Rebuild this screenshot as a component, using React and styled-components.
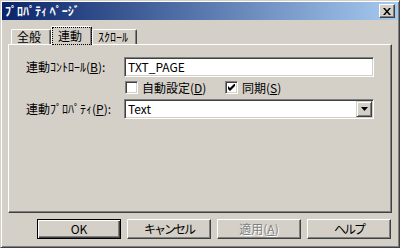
import React from "react";
import styled, { createGlobalStyle } from "styled-components";

const Global = createGlobalStyle`
  html, body { margin: 0; padding: 0; background: #d4d0c8; }
  body { font-family: "Noto Sans CJK JP", "DejaVu Sans", sans-serif; font-size: 12px; color: #000; }
  * { box-sizing: border-box; }
`;

const Window = styled.div`
  width: 400px;
  height: 248px;
  background: #d4d0c8;
  border: 1px solid;
  border-color: #d4d0c8 #404040 #404040 #d4d0c8;
  box-shadow: inset 1px 1px #fff, inset -1px -1px #808080;
  padding: 1px;
  display: flex;
  flex-direction: column;
`;

const TitleBar = styled.div`
  height: 18px;
  background: linear-gradient(to right, #0a246a, #a6caf0);
  display: flex;
  align-items: center;
  padding: 0 3px 0 3px;
`;

const Title = styled.span`
  flex: 1;
  color: #fff;
  font-weight: bold;
  font-size: 12px;
  line-height: 16px;
`;

const CloseButton = styled.div`
  width: 16px;
  height: 14px;
  background: #d4d0c8;
  border: 1px solid;
  border-color: #fff #404040 #404040 #fff;
  box-shadow: inset -1px -1px #808080;
  display: flex;
  align-items: center;
  justify-content: center;
`;

const Body = styled.div`
  padding: 6px 6px 0 6px;
  display: flex;
  flex-direction: column;
`;

const TabStrip = styled.div`
  display: flex;
  align-items: flex-end;
  height: 18px;
  padding-left: 3px;
  position: relative;
  z-index: 1;
`;

const Tab = styled.div`
  width: ${(p) => p.$w}px;
  height: ${(p) => (p.$active ? 19 : 15)}px;
  margin-bottom: ${(p) => (p.$active ? -1 : 0)}px;
  background: #d4d0c8;
  border-top: 1px solid #fff;
  border-left: 1px solid #fff;
  border-right: 1px solid #404040;
  box-shadow: inset -1px 0 #808080;
  border-radius: 2px 2px 0 0;
  display: flex;
  align-items: ${(p) => (p.$active ? "flex-start" : "center")};
  padding: ${(p) => (p.$active ? "1px 0 0 1px" : "0 0 0 5px")};
  line-height: 14px;
  white-space: nowrap;
`;

const FocusLabel = styled.span`
  outline: 1px dotted #000;
  outline-offset: 0;
  padding: 0 5px 1px 5px;
  width: 39px;
  line-height: 15px;
`;

const Panel = styled.div`
  width: 384px;
  height: 169px;
  border: 1px solid;
  border-color: #fff #404040 #404040 #fff;
  box-shadow: inset -1px -1px #808080;
  padding: 12px 0 0 17px;
  display: grid;
  grid-template-columns: 98px 250px;
  grid-template-rows: 20px 13px 20px;
  row-gap: 4px;
  align-content: start;
  align-items: center;
`;

const Label = styled.span`
  white-space: nowrap;
  line-height: 14px;
  margin-top: ${(p) => p.$shift || 0}px;
`;

const Key = styled.span`
  text-decoration: underline;
  text-underline-offset: 1px;
`;

const Field = styled.div`
  height: 20px;
  background: #fff;
  border: 1px solid;
  border-color: #808080 #fff #fff #808080;
  box-shadow: inset 1px 1px #404040, inset -1px -1px #d4d0c8;
  display: flex;
  align-items: center;
  padding: 0 2px 0 3px;
  line-height: 14px;
`;

const FieldText = styled.span`
  flex: 1;
`;

const CheckRow = styled.div`
  grid-column: 2;
  display: flex;
  align-items: center;
  padding-left: 1px;
  height: 13px;
`;

const Check = styled.div`
  display: flex;
  align-items: center;
  width: ${(p) => p.$w}px;
  gap: 4px;
  line-height: 14px;
  white-space: nowrap;
`;

const Box = styled.div`
  width: 13px;
  height: 13px;
  flex: none;
  background: #fff;
  border: 1px solid;
  border-color: #808080 #fff #fff #808080;
  box-shadow: inset 1px 1px #404040, inset -1px -1px #d4d0c8;
  display: flex;
  align-items: center;
  justify-content: center;
`;

const ComboRow = styled.div`
  grid-column: 2;
  margin-top: 2px;
`;

const DropButton = styled.div`
  width: 16px;
  height: 16px;
  background: #d4d0c8;
  border: 1px solid;
  border-color: #d4d0c8 #404040 #404040 #d4d0c8;
  box-shadow: inset 1px 1px #fff, inset -1px -1px #808080;
  display: flex;
  align-items: center;
  justify-content: center;
  margin-right: -1px;
`;

const ButtonRow = styled.div`
  display: flex;
  justify-content: flex-end;
  gap: 6px;
  margin-top: 6px;
  padding-right: 1px;
`;

const Button = styled.div`
  width: 84px;
  height: 20px;
  background: #d4d0c8;
  border: 1px solid;
  border-color: ${(p) => (p.$default ? "#000" : "#fff #404040 #404040 #fff")};
  box-shadow: ${(p) =>
    p.$default
      ? "inset 1px 1px #fff, inset -1px -1px #404040, inset -2px -2px #808080"
      : "inset -1px -1px #808080"};
  display: flex;
  align-items: center;
  justify-content: center;
  line-height: 14px;
  letter-spacing: ${(p) => (p.$tight ? "-2px" : "0")};
  color: ${(p) => (p.$disabled ? "#808080" : "#000")};
  text-shadow: ${(p) => (p.$disabled ? "1px 1px #fff" : "none")};
`;

export default function App() {
  return (
    <>
      <Global />
      <Window>
        <TitleBar>
          <Title>ﾌﾟﾛﾊﾟﾃｨ ﾍﾟｰｼﾞ</Title>
          <CloseButton>
            <svg width="8" height="7" viewBox="0 0 8 7">
              <path d="M0 0h2l2 2.5L6 0h2L5 3.5 8 7H6L4 4.5 2 7H0l3-3.5z" fill="#000" />
            </svg>
          </CloseButton>
        </TitleBar>
        <Body>
          <TabStrip>
            <Tab $w={40}>全般</Tab>
            <Tab $w={41} $active>
              <FocusLabel>連動</FocusLabel>
            </Tab>
            <Tab $w={45}>ｽｸﾛｰﾙ</Tab>
          </TabStrip>
          <Panel>
            <Label>
              連動ｺﾝﾄﾛｰﾙ(<Key>B</Key>):
            </Label>
            <Field>
              <FieldText>TXT_PAGE</FieldText>
            </Field>
            <CheckRow>
              <Check $w={100}>
                <Box />
                <span>
                  自動設定(<Key>D</Key>)
                </span>
              </Check>
              <Check $w={100}>
                <Box>
                  <svg width="7" height="7" viewBox="0 0 7 7">
                    <path d="M0 2v3l2 2 5-5V-1L2 4z" fill="#000" />
                  </svg>
                </Box>
                <span>
                  同期(<Key>S</Key>)
                </span>
              </Check>
            </CheckRow>
            <Label $shift={2}>
              連動ﾌﾟﾛﾊﾟﾃｨ(<Key>P</Key>):
            </Label>
            <ComboRow>
              <Field>
                <FieldText>Text</FieldText>
                <DropButton>
                  <svg width="7" height="4" viewBox="0 0 7 4">
                    <path d="M0 0h7L3.5 4z" fill="#000" />
                  </svg>
                </DropButton>
              </Field>
            </ComboRow>
          </Panel>
          <ButtonRow>
            <Button $default>OK</Button>
            <Button $tight>キャンセル</Button>
            <Button $disabled>
              適用(<Key>A</Key>)
            </Button>
            <Button $tight>ヘルプ</Button>
          </ButtonRow>
        </Body>
      </Window>
    </>
  );
}
